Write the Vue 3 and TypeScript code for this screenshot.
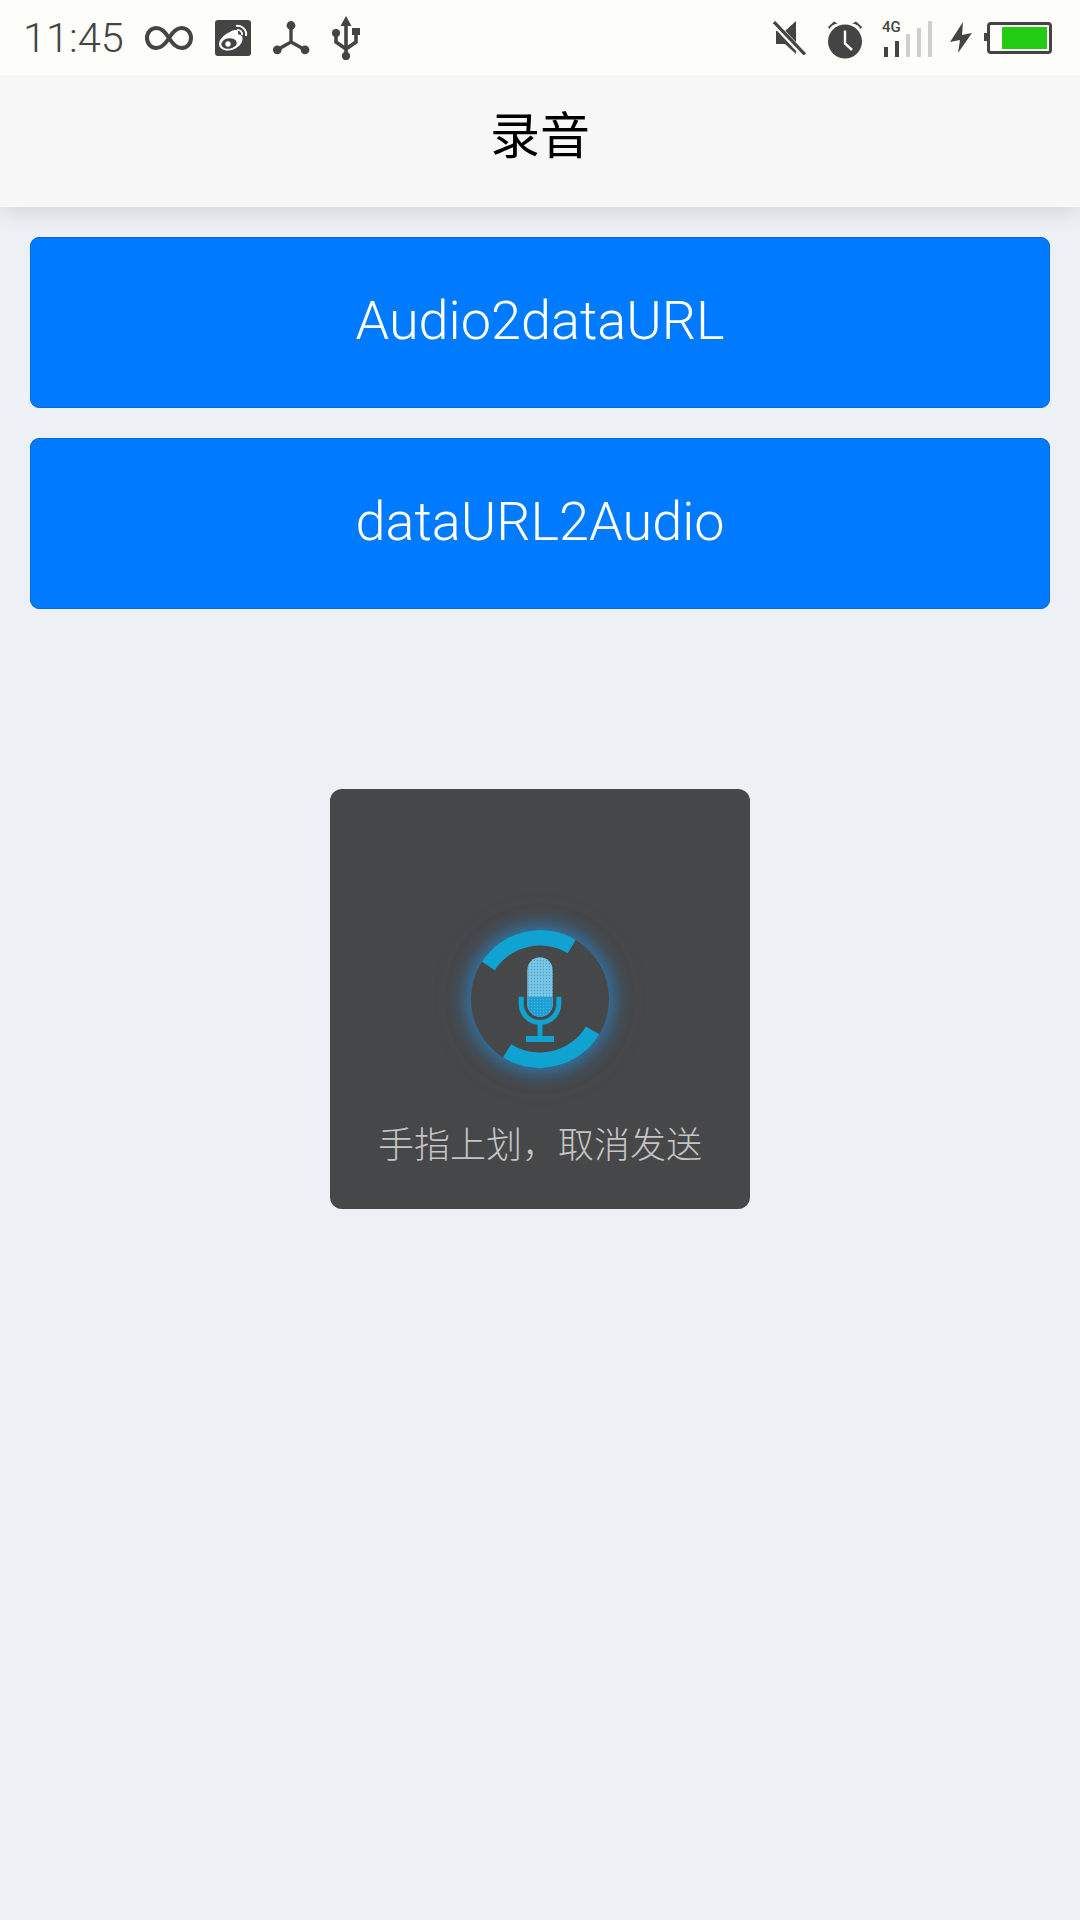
<script setup lang="ts">
const polar = (r: number, deg: number): string => {
  const a = (deg * Math.PI) / 180
  return `${(100 + r * Math.cos(a)).toFixed(2)} ${(100 + r * Math.sin(a)).toFixed(2)}`
}
const arcPath = (from: number, to: number): string => {
  const outer = 69
  const inner = 53.5
  return `M ${polar(outer, from)} A ${outer} ${outer} 0 0 1 ${polar(outer, to)} L ${polar(inner, to)} A ${inner} ${inner} 0 0 0 ${polar(inner, from)} Z`
}
const arcs: string[] = [arcPath(212.6, 301.2), arcPath(30.8, 122.4)]
const signalBars = [
  { x: 0, h: 10, on: true },
  { x: 11, h: 16, on: true },
  { x: 22, h: 23, on: false },
  { x: 33, h: 29, on: false },
  { x: 44, h: 36, on: false }
]
</script>

<template>
  <div class="page">
    <div class="status">
      <div class="status-left">
        <span class="time">11:45</span>
        <svg class="ico infinity" width="48" height="24" viewBox="0 0 48 24" fill="none" stroke="#444" stroke-width="4">
          <path d="M24 12 C20 5.500 16.500 2 11.500 2 C6 2 2 6.500 2 12 C2 17.500 6 22 11.500 22 C16.500 22 20 18.500 24 12 C28 5.500 31.500 2 36.500 2 C42 2 46 6.500 46 12 C46 17.500 42 22 36.500 22 C31.500 22 28 18.500 24 12 Z" />
        </svg>
        <svg class="ico weibo" width="36" height="36" viewBox="0 0 36 36">
          <rect width="36" height="36" rx="3" fill="#444" />
          <path d="M15 12 C19 9.500 22 9.500 23 11.500 C23.500 13 23 14 23 14.500 C26 14.500 28 16.500 27.500 19.500 C27 25 20 30.500 13 30.500 C8 30.500 4 28 4 24 C4 20 9 14.500 15 12 Z" fill="#fff" />
          <ellipse cx="14" cy="23.500" rx="7.800" ry="5.200" fill="#444" transform="rotate(-8 14 23.500)" />
          <circle cx="13" cy="24" r="2.700" fill="#fff" />
          <path d="M21 6 C27 5 32 10 31 16" fill="none" stroke="#fff" stroke-width="2" />
          <path d="M22 10 C25 9.500 27.500 12 27 15" fill="none" stroke="#fff" stroke-width="1.800" />
        </svg>
        <svg class="ico share" width="38" height="36" viewBox="0 0 38 36" fill="#444" stroke="#444">
          <path d="M19 5.500 V22 L5.300 29.800 M19 22 L33 29.800" fill="none" stroke-width="3.400" />
          <circle cx="19" cy="5.500" r="4.400" stroke="none" />
          <circle cx="5.300" cy="29.800" r="4.400" stroke="none" />
          <circle cx="33" cy="29.800" r="4.400" stroke="none" />
        </svg>
        <svg class="ico usb" width="28" height="44" viewBox="0 0 28 44" fill="#444" stroke="#444">
          <path d="M14 8 V38" fill="none" stroke-width="3.600" />
          <path d="M14 0 L19.500 10 H8.500 Z" stroke="none" />
          <path d="M4 17 V26 L14 33 L24 26 V18" fill="none" stroke-width="3.600" />
          <circle cx="4" cy="17" r="4" stroke="none" />
          <rect x="20" y="12" width="8" height="7" stroke="none" />
          <circle cx="14" cy="40" r="4.200" stroke="none" />
        </svg>
      </div>
      <div class="status-right">
        <svg class="ico" width="33" height="34" viewBox="0 0 33 34">
          <path d="M3 10 H12 L23 0 V33 L12 23 H3 Z" fill="#444" />
          <path d="M0 1 L31 34" stroke="#fdfefa" stroke-width="6" />
          <path d="M1 1 L32 33.500" stroke="#444" stroke-width="3.200" />
        </svg>
        <svg class="ico alarm" width="38" height="38" viewBox="0 0 38 38">
          <circle cx="19" cy="20.500" r="17" fill="#444" />
          <path d="M19 9.500 V22.500 L26 29" fill="none" stroke="#fdfefa" stroke-width="2.400" />
          <path d="M2 6 L8 0.500 L11.500 2.500 C7 3.500 5 5 3.500 8 Z M36 6 L30 0.500 L26.500 2.500 C31 3.500 33 5 34.500 8 Z" fill="#444" />
        </svg>
        <div class="signal">
          <span class="four-g">4G</span>
          <div class="bars">
            <span
              v-for="bar in signalBars"
              :key="bar.x"
              class="bar"
              :class="{ on: bar.on }"
              :style="{ height: bar.h + 'px' }"
            ></span>
          </div>
        </div>
        <svg class="ico bolt" width="22" height="31" viewBox="0 0 22 31">
          <path d="M13 0 L0 20 L10 18 L8 31 L22 11 L12 13 Z" fill="#444" />
        </svg>
        <div class="battery">
          <span class="battery-fill"></span>
        </div>
      </div>
    </div>

    <header class="nav">录音</header>

    <main class="content">
      <button class="btn" type="button">Audio2dataURL</button>
      <button class="btn" type="button">dataURL2Audio</button>
    </main>

    <div class="toast">
      <div class="mic-wrap">
        <span class="glow"></span>
        <svg class="mic" width="200" height="200" viewBox="0 0 200 200">
          <defs>
            <pattern id="mesh" width="3" height="3" patternUnits="userSpaceOnUse">
              <rect width="3" height="3" fill="#7cc5e4" />
              <circle cx="1.500" cy="1.500" r="0.700" fill="#3ea3d0" />
            </pattern>
            <pattern id="meshDark" width="3" height="3" patternUnits="userSpaceOnUse">
              <rect width="3" height="3" fill="#1b9fd6" />
              <circle cx="1.500" cy="1.500" r="0.700" fill="#4cb3de" />
            </pattern>
          </defs>
          <path v-for="d in arcs" :key="d" :d="d" fill="#10a2d0" />
          <rect x="87.300" y="58.300" width="25.400" height="59.400" rx="12.700" fill="url(#mesh)" />
          <path d="M87.300 97.700 H112.700 V105 A12.700 12.700 0 0 1 87.300 105 Z" fill="url(#meshDark)" />
          <path d="M81.200 97.700 V104.700 A18.800 18.800 0 0 0 118.800 104.700 V97.700" fill="none" stroke="#10a2d0" stroke-width="5" />
          <path d="M100 124 V139" stroke="#10a2d0" stroke-width="5" />
          <rect x="86" y="137" width="28" height="6" fill="#10a2d0" />
        </svg>
      </div>
      <p class="toast-text">手指上划，取消发送</p>
    </div>
  </div>
</template>

<style>
html,
body {
  margin: 0;
  padding: 0;
  background: #edf0f4;
}
</style>

<style scoped>
.page {
  position: relative;
  width: 1080px;
  height: 1920px;
  overflow: hidden;
  background: #edf0f4;
  display: flex;
  flex-direction: column;
  font-family: Roboto, "Noto Sans CJK SC", sans-serif;
}

.status {
  position: relative;
  z-index: 1;
  height: 75px;
  flex: none;
  box-sizing: border-box;
  padding: 0 28px 0 23px;
  background: #fdfefa;
  display: flex;
  align-items: center;
  justify-content: space-between;
}

.status-left,
.status-right {
  display: flex;
  align-items: center;
}

.status-left {
  gap: 21px;
}

.status-right {
  gap: 20px;
}

.ico {
  display: block;
  flex: none;
}

.weibo {
  margin-left: 1px;
}

.usb {
  margin-left: 1px;
}

.alarm {
  margin-top: 4px;
}

.bolt {
  margin-left: -2px;
}

.battery {
  margin-left: -5px;
}

.time {
  font-size: 41.500px;
  font-weight: 300;
  color: #444;
  line-height: 75px;
}

.signal {
  position: relative;
  width: 48px;
  height: 38px;
  flex: none;
}

.four-g {
  position: absolute;
  left: -2px;
  top: 1px;
  font-size: 15px;
  font-weight: 500;
  line-height: 14px;
  color: #444;
}

.bars {
  position: absolute;
  left: 0;
  right: 0;
  bottom: 0;
  display: flex;
  align-items: flex-end;
  gap: 7px;
}

.bar {
  width: 4px;
  background: #cfd0cc;
}

.bar.on {
  background: #444;
}

.battery {
  position: relative;
  box-sizing: border-box;
  width: 65px;
  height: 32px;
  border: 3.500px solid #444;
  border-radius: 4px;
  padding: 2px 2px 2px 12px;
  display: flex;
}

.battery::before {
  content: "";
  position: absolute;
  left: -6px;
  top: 8px;
  width: 2.500px;
  height: 8px;
  background: #444;
}

.battery-fill {
  flex: 1;
  background: #22cc15;
}

.nav {
  height: 132px;
  flex: none;
  box-sizing: border-box;
  padding-bottom: 18px;
  background: #f7f7f8;
  color: #000;
  font-family: "Noto Sans CJK SC", sans-serif;
  font-size: 50px;
  display: flex;
  align-items: center;
  justify-content: center;
  box-shadow: 0 4px 22px rgba(0, 0, 0, 0.12);
  position: relative;
}

.content {
  padding: 30px;
  display: flex;
  flex-direction: column;
  gap: 30px;
}

.btn {
  height: 171px;
  box-sizing: border-box;
  width: 100%;
  margin: 0;
  border: 1px solid #0067d6;
  border-radius: 9px;
  background: #007aff;
  color: #fff;
  font-family: Roboto, sans-serif;
  font-size: 54px;
  font-weight: 300;
  padding: 0 0 5px;
}

.toast {
  position: absolute;
  left: 330px;
  top: 789px;
  width: 420px;
  height: 420px;
  box-sizing: border-box;
  border-radius: 12px;
  background: #464748;
  display: flex;
  flex-direction: column;
  align-items: center;
}

.mic-wrap {
  position: relative;
  width: 200px;
  height: 200px;
  margin-top: 110px;
}

.glow {
  position: absolute;
  left: 31px;
  top: 31px;
  width: 138px;
  height: 138px;
  border-radius: 50%;
  background: #464748;
  box-shadow: 0 0 18px 4px rgba(40, 140, 215, 0.7), 0 0 36px 6px rgba(40, 130, 200, 0.15);
}

.mic {
  position: absolute;
  left: 0;
  top: 0;
}

.toast-text {
  margin: 16px 0 0;
  font-family: "Noto Sans CJK SC", sans-serif;
  font-size: 36px;
  font-weight: 300;
  line-height: 54px;
  color: #c4c4c4;
}
</style>
